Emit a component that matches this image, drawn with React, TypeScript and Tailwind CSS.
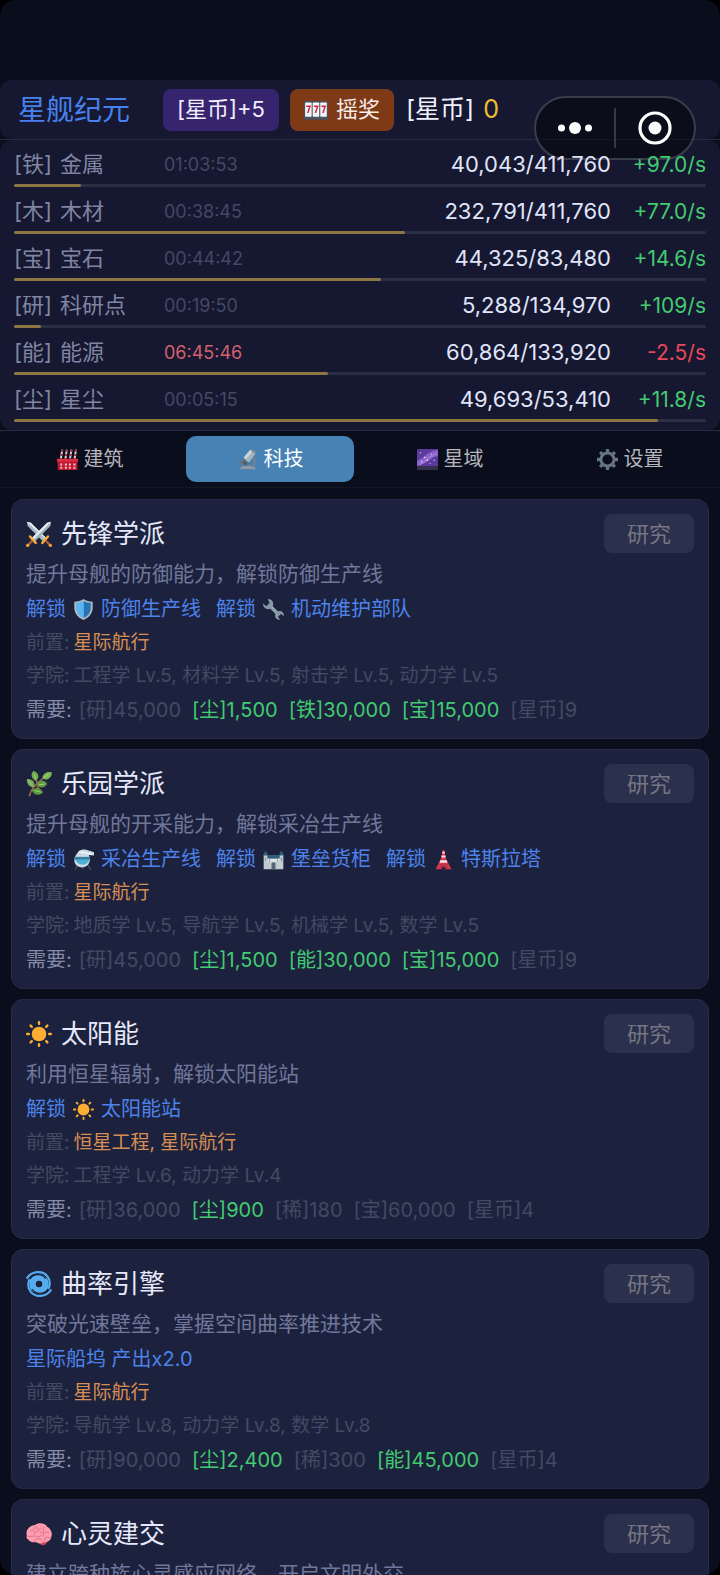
import React, { type ReactNode } from 'react';

type IconName =
  | 'slots' | 'factory' | 'microscope' | 'galaxy' | 'gear' | 'swords' | 'herb' | 'sun'
  | 'cyclone' | 'brain' | 'shield' | 'wrench' | 'alembic' | 'castle' | 'tower';

const art: Record<IconName, ReactNode> = {
  slots: (
    <>
      <rect x="0" y="4" width="32" height="25" rx="2" fill="#4a5360" />
      <g fill="#f5f6f8">
        <rect x="1.500" y="6" width="8.700" height="19" rx="1" />
        <rect x="11.600" y="6" width="8.700" height="19" rx="1" />
        <rect x="21.700" y="6" width="8.700" height="19" rx="1" />
      </g>
      <path d="M3 11h5l-3 9M13.200 11h5l-3 9M23.200 11h5l-3 9" fill="none" stroke="#d42747" strokeWidth="2" />
    </>
  ),
  factory: (
    <>
      <g strokeWidth="3" fill="none">
        <path d="M5.500 17L8 1M12.500 17L15 1M19.500 17L22 1M26.500 17L29 1" stroke="#d9d3d6" />
        <path d="M5.500 17L8 1M12.500 17L15 1M19.500 17L22 1M26.500 17L29 1" stroke="#9c2440" strokeDasharray="3 3.500" />
      </g>
      <rect x="0" y="15" width="32" height="5" fill="#dd2e44" />
      <rect x="1" y="19" width="30" height="13" fill="#be1931" />
      <path d="M5 22h3v3H5zM12 22h3v3h-3zM18 22h3v3h-3zM25 22h3v3h-3zM5 27h3v3H5zM12 27h3v3h-3zM18 27h3v3h-3zM25 27h3v3h-3z" fill="#f0c3cf" />
    </>
  ),
  microscope: (
    <>
      <path d="M3 31h26l-4-5H8z" fill="#8d99a3" />
      <path d="M21 12c8 3 8 11 1 15" fill="none" stroke="#74838f" strokeWidth="3.500" />
      <path d="M1 18l12-2 5 5-3 5-10-2z" fill="#647681" />
      <path d="M10 13L20 1l8 6-10 13z" fill="#ccd4db" />
      <path d="M14 15L24 4l4 3-10 13z" fill="#a6b3be" />
      <path d="M24 0l6 5-2 3-6-5z" fill="#7d8a94" />
      <path d="M11 18l5 4-3 3-5-4z" fill="#50606c" />
    </>
  ),
  galaxy: (
    <>
      <rect x="0" y="0" width="32" height="32" rx="2" fill="#5c3aa0" />
      <path d="M0 18C8 16 16 3 32 1v10C22 11 14 24 0 26z" fill="#8a62c8" />
      <path d="M3 23C12 21 18 10 30 7" fill="none" stroke="#a37fd8" strokeWidth="2" />
      <path d="M0 26h32v4a2 2 0 0 1-2 2H2a2 2 0 0 1-2-2z" fill="#34314a" />
      <g fill="#eee0ff">
        <circle cx="5" cy="6" r="1" /><circle cx="12" cy="13" r="1.200" /><circle cx="16" cy="17" r="1.100" />
        <circle cx="22" cy="8" r=".9" /><circle cx="26" cy="17" r="1" /><circle cx="7" cy="19" r="1" /><circle cx="20" cy="22" r=".8" />
      </g>
    </>
  ),
  gear: (
    <>
      <circle cx="16" cy="16" r="10" fill="none" stroke="#66757f" strokeWidth="4.500" />
      <g stroke="#66757f" strokeWidth="5">
        <path d="M16 0v5M16 27v5M0 16h5M27 16h5M4.700 4.700l3.500 3.500M23.800 23.800l3.500 3.500M27.300 4.700l-3.500 3.500M8.200 23.800l-3.500 3.500" />
      </g>
    </>
  ),
  swords: (
    <>
      <path d="M1 1l5 1 20 20-4 4L2 6z" fill="#a9bcc7" />
      <path d="M1 1l24 22 1-1L6 2z" fill="#e4edf1" />
      <path d="M31 1l-5 1L6 22l4 4L30 6z" fill="#9fb3bf" />
      <path d="M31 1L26 2 6 22l2 2z" fill="#e4edf1" />
      <g fill="none" strokeLinecap="round">
        <path d="M20 27l7-8M12 27l-7-8" stroke="#ffac33" strokeWidth="3" />
        <path d="M25 25l4 4M7 25l-4 4" stroke="#a8593a" strokeWidth="3" />
      </g>
      <g fill="#f4a33a"><circle cx="30" cy="30" r="2" /><circle cx="2" cy="30" r="2" /></g>
    </>
  ),
  herb: (
    <>
      <path d="M4 31C7 20 12 16 25 6M10 20L8 12M14 15l-3-7M13 18l5 7M18 13l7 3" fill="none" stroke="#9a674d" strokeWidth="2" />
      <path d="M9 0c6 1 9 8 3 12-5-2-7-8-3-12z" fill="#6ea94d" />
      <path d="M32 2c-1 8-7 10-12 7 1-6 6-9 12-7z" fill="#78b657" />
      <path d="M1 10c7-1 10 4 9 10-6 0-9-4-9-10z" fill="#76ad58" />
      <path d="M13 17c3-7 11-6 13-1-4 6-10 5-13 1z" fill="#609a43" />
      <path d="M7 24c4-5 11-4 14 2-5 5-11 4-14-2z" fill="#5c963d" />
      <path d="M10 3l2 7M22 8l6-4M3 12l5 6M16 17l7-1M11 24l7 2" stroke="#b5db81" strokeWidth="1" />
    </>
  ),
  sun: (
    <>
      <circle cx="16" cy="16" r="9" fill="#ffac33" />
      <g stroke="#ffac33" strokeWidth="3" strokeLinecap="round">
        <path d="M16 1.500v2M16 28.500v2M1.500 16h2M28.500 16h2M5.700 5.700l1.400 1.400M24.900 24.900l1.400 1.400M26.300 5.700l-1.400 1.400M7.100 24.900l-1.400 1.400" />
      </g>
    </>
  ),
  cyclone: (
    <>
      <circle cx="16" cy="16" r="8" fill="none" stroke="#55acee" strokeWidth="8" />
      <path d="M1.500 8.500C7 0 20-1 26 6c4 5 4 10 2 15M30.500 23.500C25 32 12 33 6 26c-4-5-4-10-2-15" fill="none" stroke="#55acee" strokeWidth="2.600" strokeLinecap="round" />
      <path d="M5 9C10 3 20 3 24 9M27 23C22 29 12 29 8 23" fill="none" stroke="#1c223e" strokeWidth="1.400" strokeLinecap="round" />
    </>
  ),
  brain: (
    <>
      <path d="M16 24c5-2 9-2 10 1-1 5-5 6-8 4z" fill="#d4465f" />
      <path d="M1 18C-1 11 5 5 11 5c5-4 13-2 15 2 5 2 7 9 5 13-1 5-6 7-10 6-3 3-7 1-8 0-5 1-9-1-10-3-2-1-3-3-2-5z" fill="#ff9caf" />
      <path d="M5 12c4 1 6-2 5-5M13 6c0 5 4 6 6 2M16 13c-4-1-7 1-6 4M2 19c5 1 7-2 12 0 3 1 4-1 6-2M22 7c-2 6 0 8 6 7M17 14c4-1 6 2 4 5M10 25c1-4 6-4 9-2M23 25c-1-4 3-6 7-4" fill="none" stroke="#e07a90" strokeWidth="1.300" />
    </>
  ),
  shield: (
    <>
      <path d="M16 0c4 3 9 4 14 4v9c0 9-6 16-14 19C8 29 2 22 2 13V4c5 0 10-1 14-4z" fill="#aeb9c2" />
      <path d="M16 3c4 2 7 3 11 3v7c0 8-4 13-11 16z" fill="#2473b4" />
      <path d="M16 3C12 5 9 6 5 6v7c0 8 4 13 11 16z" fill="#59b5ee" />
    </>
  ),
  wrench: (
    <>
      <path d="M7 0c7 0 10 5 8 11l8 8c5-2 9 2 9 7l-5-3-4 4 3 5c-6 0-9-5-7-9l-8-8C5 17 0 13 0 7l5 4 5-5z" fill="#8899a6" />
      <path d="M13 12l8 8" stroke="#a9b6c0" strokeWidth="1.500" />
    </>
  ),
  alembic: (
    <>
      <path d="M8 23L3 32M22 23l5 9M15 25v6" stroke="#516171" strokeWidth="1.500" />
      <path d="M8 4C16-2 22 2 32 5v5l-8-1c5 9-1 19-10 19C4 28-1 19 4 10z" fill="#cbdbe5" />
      <path d="M3 13h22c1 14-20 15-22 0z" fill="#4eb0d6" />
      <path d="M2 12h24v4H2z" fill="#357e9f" />
      <path d="M9 4l20 4" stroke="#f2f7f8" strokeWidth="2" />
    </>
  ),
  castle: (
    <>
      <path d="M1 9h6v4h18V9h6v22H1z" fill="#c2cbd0" />
      <path d="M0 10l4-8 4 8zM24 10l4-8 4 8zM7 9h18v6H7z" fill="#315e7c" />
      <path d="M7 15h18v4H7z" fill="#e1e5e8" />
      <path d="M13 31v-9q3-4 6 0v9z" fill="#526575" />
      <path d="M4 13v5M28 13v5M10 16v3M22 16v3" stroke="#748693" strokeWidth="1.500" />
    </>
  ),
  tower: (
    <>
      <path d="M15 1h2l3 14 8 16H4l8-16z" fill="#d9374b" />
      <path d="M14 4h4v3h-4zM13 10h6v3h-6zM11 17h10l1 4H10z" fill="#efe6ea" />
      <path d="M12 31q4-7 8 0z" fill="#1c223e" />
      <path d="M10 23l13 6M22 23L9 29" stroke="#842b43" />
    </>
  ),
};

function Icon({ name, className }: { name: IconName; className: string }) {
  return <svg viewBox="0 0 32 32" aria-hidden="true" className={`shrink-0 ${className}`}>{art[name]}</svg>;
}

const resources = [
  { tag: '铁', name: '金属', time: '01:03:53', value: '40,043/411,760', rate: '+97.0/s', fill: 9.7, down: false },
  { tag: '木', name: '木材', time: '00:38:45', value: '232,791/411,760', rate: '+77.0/s', fill: 56.5, down: false },
  { tag: '宝', name: '宝石', time: '00:44:42', value: '44,325/83,480', rate: '+14.6/s', fill: 53.1, down: false },
  { tag: '研', name: '科研点', time: '00:19:50', value: '5,288/134,970', rate: '+109/s', fill: 3.9, down: false },
  { tag: '能', name: '能源', time: '06:45:46', value: '60,864/133,920', rate: '-2.5/s', fill: 45.4, down: true },
  { tag: '尘', name: '星尘', time: '00:05:15', value: '49,693/53,410', rate: '+11.8/s', fill: 93, down: false },
];

const tabs: { icon: IconName; label: string; active: boolean }[] = [
  { icon: 'factory', label: '建筑', active: false },
  { icon: 'microscope', label: '科技', active: true },
  { icon: 'galaxy', label: '星域', active: false },
  { icon: 'gear', label: '设置', active: false },
];

interface Tech {
  icon: IconName;
  title: string;
  desc: string;
  unlocks: { icon: IconName; label: string }[];
  bonus?: string;
  prereq: string;
  academy: string;
  costs: [string, boolean][];
}

const techs: Tech[] = [
  {
    icon: 'swords', title: '先锋学派', desc: '提升母舰的防御能力，解锁防御生产线',
    unlocks: [{ icon: 'shield', label: '防御生产线' }, { icon: 'wrench', label: '机动维护部队' }],
    prereq: '星际航行', academy: '工程学 Lv.5, 材料学 Lv.5, 射击学 Lv.5, 动力学 Lv.5',
    costs: [['[研]45,000', false], ['[尘]1,500', true], ['[铁]30,000', true], ['[宝]15,000', true], ['[星币]9', false]],
  },
  {
    icon: 'herb', title: '乐园学派', desc: '提升母舰的开采能力，解锁采冶生产线',
    unlocks: [{ icon: 'alembic', label: '采冶生产线' }, { icon: 'castle', label: '堡垒货柜' }, { icon: 'tower', label: '特斯拉塔' }],
    prereq: '星际航行', academy: '地质学 Lv.5, 导航学 Lv.5, 机械学 Lv.5, 数学 Lv.5',
    costs: [['[研]45,000', false], ['[尘]1,500', true], ['[能]30,000', true], ['[宝]15,000', true], ['[星币]9', false]],
  },
  {
    icon: 'sun', title: '太阳能', desc: '利用恒星辐射，解锁太阳能站',
    unlocks: [{ icon: 'sun', label: '太阳能站' }],
    prereq: '恒星工程, 星际航行', academy: '工程学 Lv.6, 动力学 Lv.4',
    costs: [['[研]36,000', false], ['[尘]900', true], ['[稀]180', false], ['[宝]60,000', false], ['[星币]4', false]],
  },
  {
    icon: 'cyclone', title: '曲率引擎', desc: '突破光速壁垒，掌握空间曲率推进技术',
    unlocks: [], bonus: '星际船坞 产出x2.0',
    prereq: '星际航行', academy: '导航学 Lv.8, 动力学 Lv.8, 数学 Lv.8',
    costs: [['[研]90,000', false], ['[尘]2,400', true], ['[稀]300', false], ['[能]45,000', true], ['[星币]4', false]],
  },
  {
    icon: 'brain', title: '心灵建交', desc: '建立跨种族心灵感应网络，开启文明外交',
    unlocks: [], prereq: '', academy: '', costs: [],
  },
];

function TechCard({ tech }: { tech: Tech }) {
  return (
    <article className="flex flex-col gap-[7px] rounded-xl border border-[#262c49] bg-[#1c223e] p-3.5 text-[20px] leading-7">
      <div className="flex h-[39px] items-center justify-between">
        <h2 className="flex items-center gap-[9px] text-[26px] text-[#e6e9fb]">
          <Icon name={tech.icon} className="size-[26px]" />
          {tech.title}
        </h2>
        <button disabled className="h-[39px] rounded-lg bg-[#2b304c] px-[23px] text-[22px] text-[#757682]">研究</button>
      </div>
      <p className="text-[21px] text-[#71779a]">{tech.desc}</p>
      {(tech.unlocks.length > 0 || tech.bonus) && (
        <p className="flex gap-[15px] text-[#4d82ea]">
          {tech.bonus}
          {tech.unlocks.map((u) => (
            <span key={u.label} className="flex items-center gap-[7px]">
              解锁
              <Icon name={u.icon} className="size-[21px]" />
              {u.label}
            </span>
          ))}
        </p>
      )}
      {tech.prereq && (
        <p className="flex gap-1 text-[19px] leading-[26px] text-[#434963]">前置: <span className="text-[#d88e52]">{tech.prereq}</span></p>
      )}
      {tech.academy && (
        <p className="flex gap-1 text-[19px] leading-[26px] text-[#434963]">学院: <span>{tech.academy}</span></p>
      )}
      {tech.costs.length > 0 && (
        <div className="flex gap-[7px] text-[#434963]">
          <span className="text-[#858aa6]">需要:</span>
          <p className="flex gap-[11px]">
            {tech.costs.map(([label, met]) => (
              <span key={label} className={met ? 'text-[#42cb70]' : ''}>{label}</span>
            ))}
          </p>
        </div>
      )}
    </article>
  );
}

export default function App() {
  return (
    <div className="h-screen bg-black">
      <div className="h-full overflow-hidden rounded-2xl bg-[#0a0d1b] pt-20 font-['Inter','Noto_Sans_CJK_SC',sans-serif] text-[22px] whitespace-nowrap">
        <header className="relative flex h-[59px] items-center rounded-xl bg-[#151830] px-[18px]">
          <h1 className="w-[145px] text-[28px] text-[#4781ed]">星舰纪元</h1>
          <button className="h-[42px] rounded-lg bg-[#37246e] px-3.5 text-[#f1edfb]">[星币]+5</button>
          <button className="ml-[11px] flex h-[42px] items-center gap-2 rounded-lg bg-[#7e3917] px-3.5 text-[#f8eee9]">
            <Icon name="slots" className="size-6" />
            摇奖
          </button>
          <p className="ml-3 flex gap-[9px] text-[25px] text-[#f0f1fa]">[星币] <span className="text-[#efbd34]">0</span></p>
          <div className="absolute top-4 right-6 z-10 flex h-16 w-[162px] items-center rounded-full border-2 border-[#3a3d4c] bg-black/45">
            <button aria-label="更多" className="flex flex-1 justify-center">
              <svg viewBox="0 0 36 14" className="h-3.5 w-9 fill-white"><circle cx="4.500" cy="7" r="3.500" /><circle cx="18" cy="7" r="6" /><circle cx="31.500" cy="7" r="3.500" /></svg>
            </button>
            <span className="h-10 w-0.5 bg-[#373a47]" />
            <button aria-label="关闭" className="flex flex-1 justify-center">
              <svg viewBox="0 0 34 34" className="size-[34px]"><circle cx="17" cy="17" r="15" fill="none" stroke="white" strokeWidth="3.200" /><circle cx="17" cy="17" r="6.500" fill="white" /></svg>
            </button>
          </div>
        </header>

        <section className="border-y border-[#252b42]">
          <div className="rounded-xl bg-[#151830] px-3.5 pb-2">
            {resources.map((r) => (
              <div key={r.tag}>
                <div className="relative z-20 flex h-11 items-center pt-[5px]">
                  <span className="flex w-[150px] gap-2 text-[#7f85a3]">[{r.tag}] <span>{r.name}</span></span>
                  <span className={r.down ? 'text-[18px] text-[#d3606c]' : 'text-[18px] text-[#434963]'}>{r.time}</span>
                  <span className="ml-auto text-[#e0e5fa]">{r.value}</span>
                  <span className={r.down ? 'w-[95px] text-right text-[21px] text-[#e5485a]' : 'w-[95px] text-right text-[21px] text-[#42cb70]'}>{r.rate}</span>
                </div>
                <div className="h-[3px] rounded-full bg-[#2b2f43]">
                  <div className="h-full rounded-full bg-[#8d7644]" style={{ width: `${r.fill}%` }} />
                </div>
              </div>
            ))}
          </div>
        </section>

        <nav className="grid h-[57px] grid-cols-4 border-b border-[#121725] text-[20px]">
          {tabs.map((t) => (
            <button
              key={t.label}
              className={`mx-1.5 my-[5px] flex items-center justify-center gap-1.5 rounded-[10px] ${t.active ? 'bg-[#4682b4] text-white' : 'text-[#b5b6bc]'}`}
            >
              <Icon name={t.icon} className="size-[21px]" />
              {t.label}
            </button>
          ))}
        </nav>

        <main className="flex flex-col gap-2.5 px-[11px] pt-[11px]">
          {techs.map((t) => <TechCard key={t.title} tech={t} />)}
        </main>
      </div>
    </div>
  );
}
